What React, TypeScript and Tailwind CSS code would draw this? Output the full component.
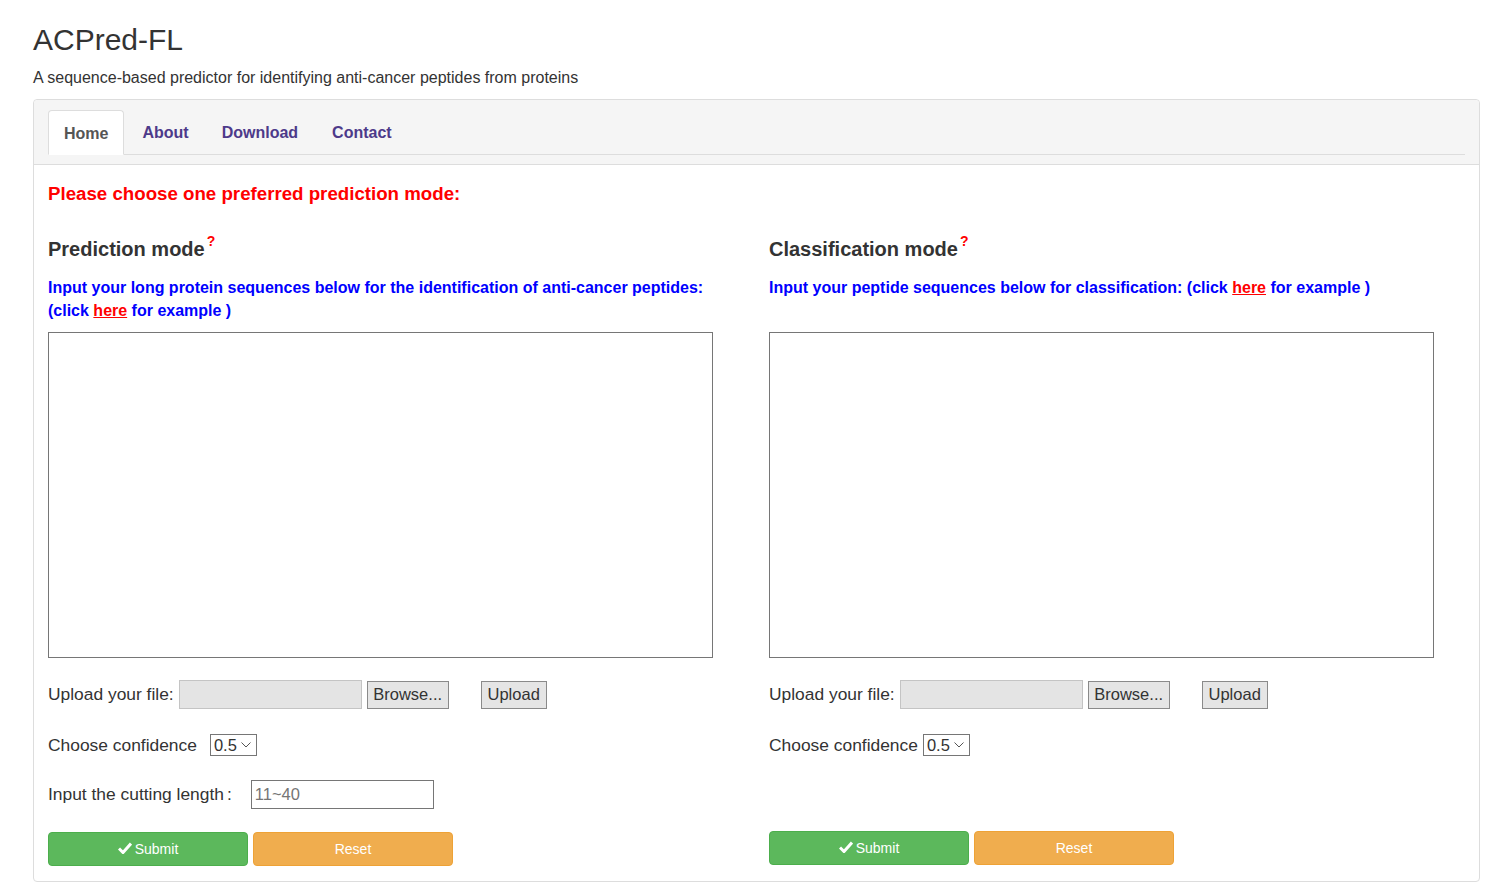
import React from "react";

function Check() {
  return (
    <svg width="14" height="12" viewBox="0 0 14 12" className="inline-block mr-[3px] -mt-[2px]">
      <path d="M1 6.5 L5 10.5 L13 1.5" stroke="white" strokeWidth="3" fill="none" strokeLinejoin="miter" />
    </svg>
  );
}

function Chevron() {
  return (
    <svg width="10" height="6" viewBox="0 0 10 6" className="ml-[4px]">
      <path d="M0.5 0.5 L5 5 L9.5 0.5" stroke="#555" strokeWidth="1" fill="none" />
    </svg>
  );
}

function Column({
  title,
  desc,
  showCut,
  confGap,
}: {
  title: string;
  desc: React.ReactNode;
  showCut: boolean;
  confGap: string;
}) {
  return (
    <div className="flex flex-col">
      <div className="h-[42px] text-[20px] font-bold text-[#333] mt-[21px] leading-[42px] pt-[2px]">
        {title}
        <span className="text-[#ff0000] text-[14px] relative -top-[10px] ml-[2px]">?</span>
      </div>
      <div className="text-[16px] font-bold text-[#0000ff] leading-[23px] h-[46px] mt-[8px]">{desc}</div>
      <div className="w-[665px] h-[326px] border border-[#767676] mt-[10px] bg-white"></div>
      <div className="flex items-center mt-[22px] h-[29px] text-[17.4px] text-[#333]">
        <span>Upload your file:</span>
        <div className="w-[183px] h-[29px] bg-[#e4e4e4] border border-[#c4c4c4] ml-[5px]"></div>
        <div className="h-[28px] w-[82px] ml-[5px] border border-[#8a8a8a] bg-[#e5e5e5] flex items-center justify-center text-[#333] text-[16.5px]">
          Browse...
        </div>
        <div className="h-[28px] w-[66px] ml-[32px] border border-[#8a8a8a] bg-[#e5e5e5] flex items-center justify-center text-[#333] text-[16.5px]">
          Upload
        </div>
      </div>
      <div className="flex items-center mt-[25px] h-[22px] text-[17.4px] text-[#333]">
        <span>Choose confidence</span>
        <div className={`${confGap} h-[22px] w-[47px] border border-[#767676] flex items-center pl-[3px] bg-white text-[16.5px]`}>
          0.5
          <Chevron />
        </div>
      </div>
      {showCut ? (
        <div className="flex items-center mt-[24px] h-[29px] text-[17.4px] text-[#333]">
          <span>
            Input the cutting length<span className="ml-[3px]">:</span>
          </span>
          <div className="ml-[19px] h-[29px] w-[183px] border border-[#767676] text-[#757575] pl-[3px] flex items-center pb-[1px] text-[16.5px]">
            11~40
          </div>
        </div>
      ) : (
        <div className="h-[53px]"></div>
      )}
      <div className={`flex gap-[5px] ${showCut ? "mt-[23px]" : "mt-[22px]"}`}>
        <div className="w-[200px] h-[34px] rounded-[4px] bg-[#5cb85c] border border-[#4cae4c] text-white text-[14px] flex items-center justify-center">
          <Check />
          Submit
        </div>
        <div className="w-[200px] h-[34px] rounded-[4px] bg-[#f0ad4e] border border-[#eea236] text-white text-[14px] flex items-center justify-center">
          Reset
        </div>
      </div>
    </div>
  );
}

export default function App() {
  return (
    <div className="min-h-[885px] bg-white font-['Liberation_Sans',Arial,sans-serif] text-[#333]">
      <div className="px-[33px] pt-[21px]">
        <h1 className="text-[30px] leading-[38px] text-[#333] font-normal">ACPred-FL</h1>
        <p className="text-[16px] leading-[20px] mt-[9px] text-[#333]">
          A sequence-based predictor for identifying anti-cancer peptides from proteins
        </p>
        <div className="mt-[11px] w-[1447px] border border-[#dddddd] rounded-[4px] pb-[15px]">
          <div className="bg-[#f5f5f5] border-b border-[#dddddd] rounded-t-[4px] px-[14px] pt-[10px] h-[65px]">
            <div className="flex border-b border-[#dddddd] h-[45px]">
              <div className="h-[45px] px-[15px] bg-white border border-[#dddddd] border-b-white rounded-t-[4px] flex items-center text-[16px] font-bold text-[#555] -mb-px pt-[2px]">
                Home
              </div>
              <div className="h-[44px] pl-[18px] pr-[16px] flex items-center text-[16px] font-bold text-[#4d3a8a] pt-[2px]">About</div>
              <div className="h-[44px] px-[17px] flex items-center text-[16px] font-bold text-[#4d3a8a] pt-[2px]">Download</div>
              <div className="h-[44px] px-[17px] flex items-center text-[16px] font-bold text-[#4d3a8a] pt-[2px]">Contact</div>
            </div>
          </div>
          <div className="px-[14px]">
            <div className="text-[18.7px] font-bold text-[#ff0000] mt-[18px] leading-[22px]">
              Please choose one preferred prediction mode:
            </div>
            <div className="grid grid-cols-[721px_1fr]">
              <Column
                title="Prediction mode"
                desc={
                  <>
                    Input your long protein sequences below for the identification of anti-cancer peptides:
                    <br />
                    (click <span className="text-[#ff0000] underline">here</span> for example )
                  </>
                }
                showCut={true}
                confGap="ml-[13px]"
              />
              <Column
                title="Classification mode"
                desc={
                  <>
                    Input your peptide sequences below for classification: (click{" "}
                    <span className="text-[#ff0000] underline">here</span> for example )
                  </>
                }
                showCut={false}
                confGap="ml-[5px]"
              />
            </div>
          </div>
        </div>
      </div>
    </div>
  );
}
